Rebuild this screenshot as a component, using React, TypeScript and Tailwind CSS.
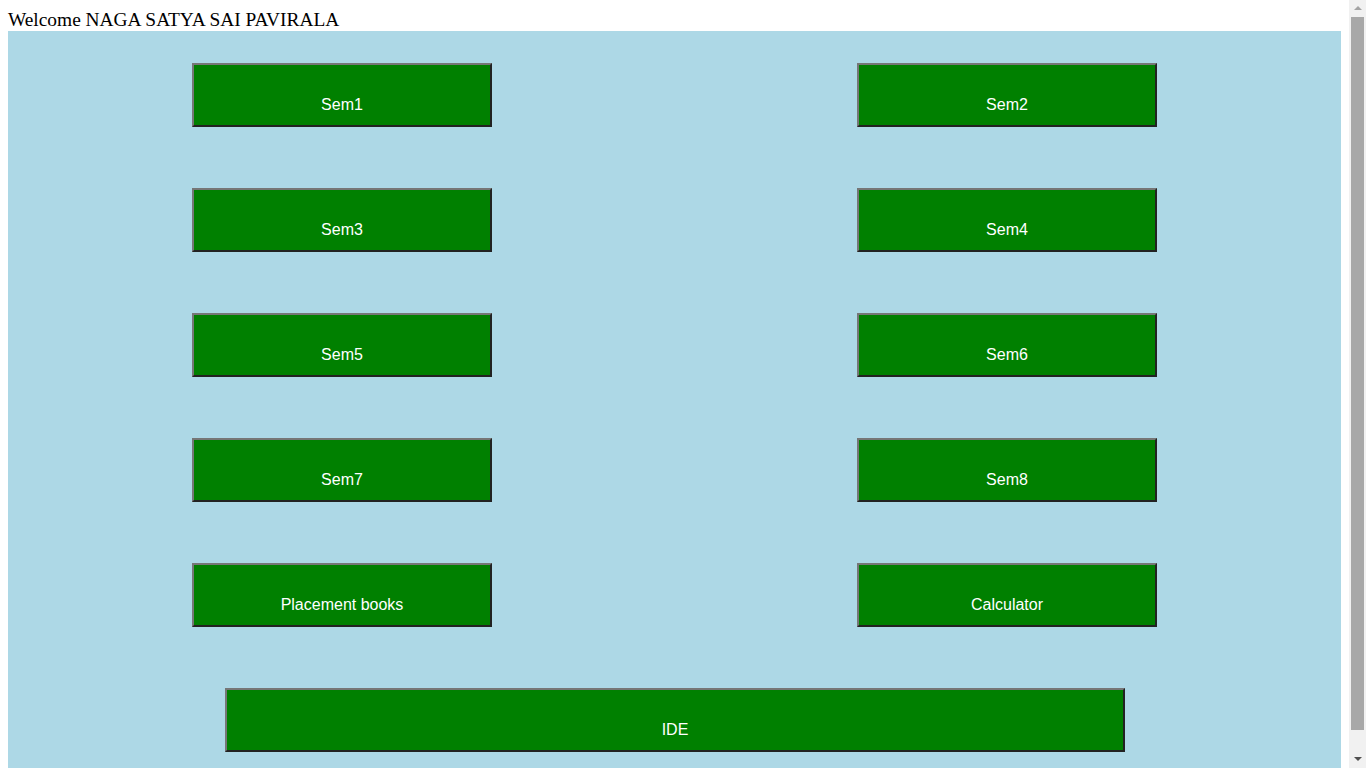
import React from 'react';

const rows = [
  ['Sem1', 'Sem2'],
  ['Sem3', 'Sem4'],
  ['Sem5', 'Sem6'],
  ['Sem7', 'Sem8'],
  ['Placement books', 'Calculator'],
];

function GreenButton({ label, wide }: { label: string; wide?: boolean }) {
  return (
    <button
      className={`${wide ? 'w-[900px]' : 'w-[300px]'} h-[64px] flex items-center justify-center pt-[20px] bg-[#008000] text-white text-[16px] font-['Liberation_Sans',Arial,sans-serif] border-2 border-t-[#767676] border-l-[#767676] border-b-[#222222] border-r-[#222222]`}
    >
      {label}
    </button>
  );
}

// the browser's scrollbar, drawn since the screenshot doesn't show it
function FakeScrollbar() {
  return (
    <div className="fixed top-0 right-0 w-[17px] h-[768px] bg-[#f1f1f1] flex flex-col items-center">
      <svg width="10" height="17" viewBox="0 0 10 17" className="shrink-0">
        <path d="M1 10 L5 6 L9 10 Z" fill="#a3a3a3" />
      </svg>
      <div className="w-[13px] h-[713px] bg-[#a8a8a8]" />
      <div className="flex-1" />
      <svg width="10" height="17" viewBox="0 0 10 17" className="shrink-0">
        <path d="M1 6 L5 10 L9 6 Z" fill="#505050" />
      </svg>
    </div>
  );
}

export default function App() {
  return (
    <div className="p-2 w-[1349px] bg-white font-['Liberation_Serif','Times_New_Roman',serif]">
      <div className="text-[19.4px] leading-[23px] text-black">Welcome NAGA SATYA SAI PAVIRALA</div>
      <div className="w-[1333px] bg-[#add8e6] pt-[32px] pb-[31px] flex flex-col gap-[61px]">
        {rows.map(([a, b]) => (
          <div key={a} className="flex pl-[184px] gap-[365px]">
            <GreenButton label={a} />
            <GreenButton label={b} />
          </div>
        ))}
        <div className="flex pl-[217px]">
          <GreenButton label="IDE" wide />
        </div>
      </div>
      <FakeScrollbar />
    </div>
  );
}
